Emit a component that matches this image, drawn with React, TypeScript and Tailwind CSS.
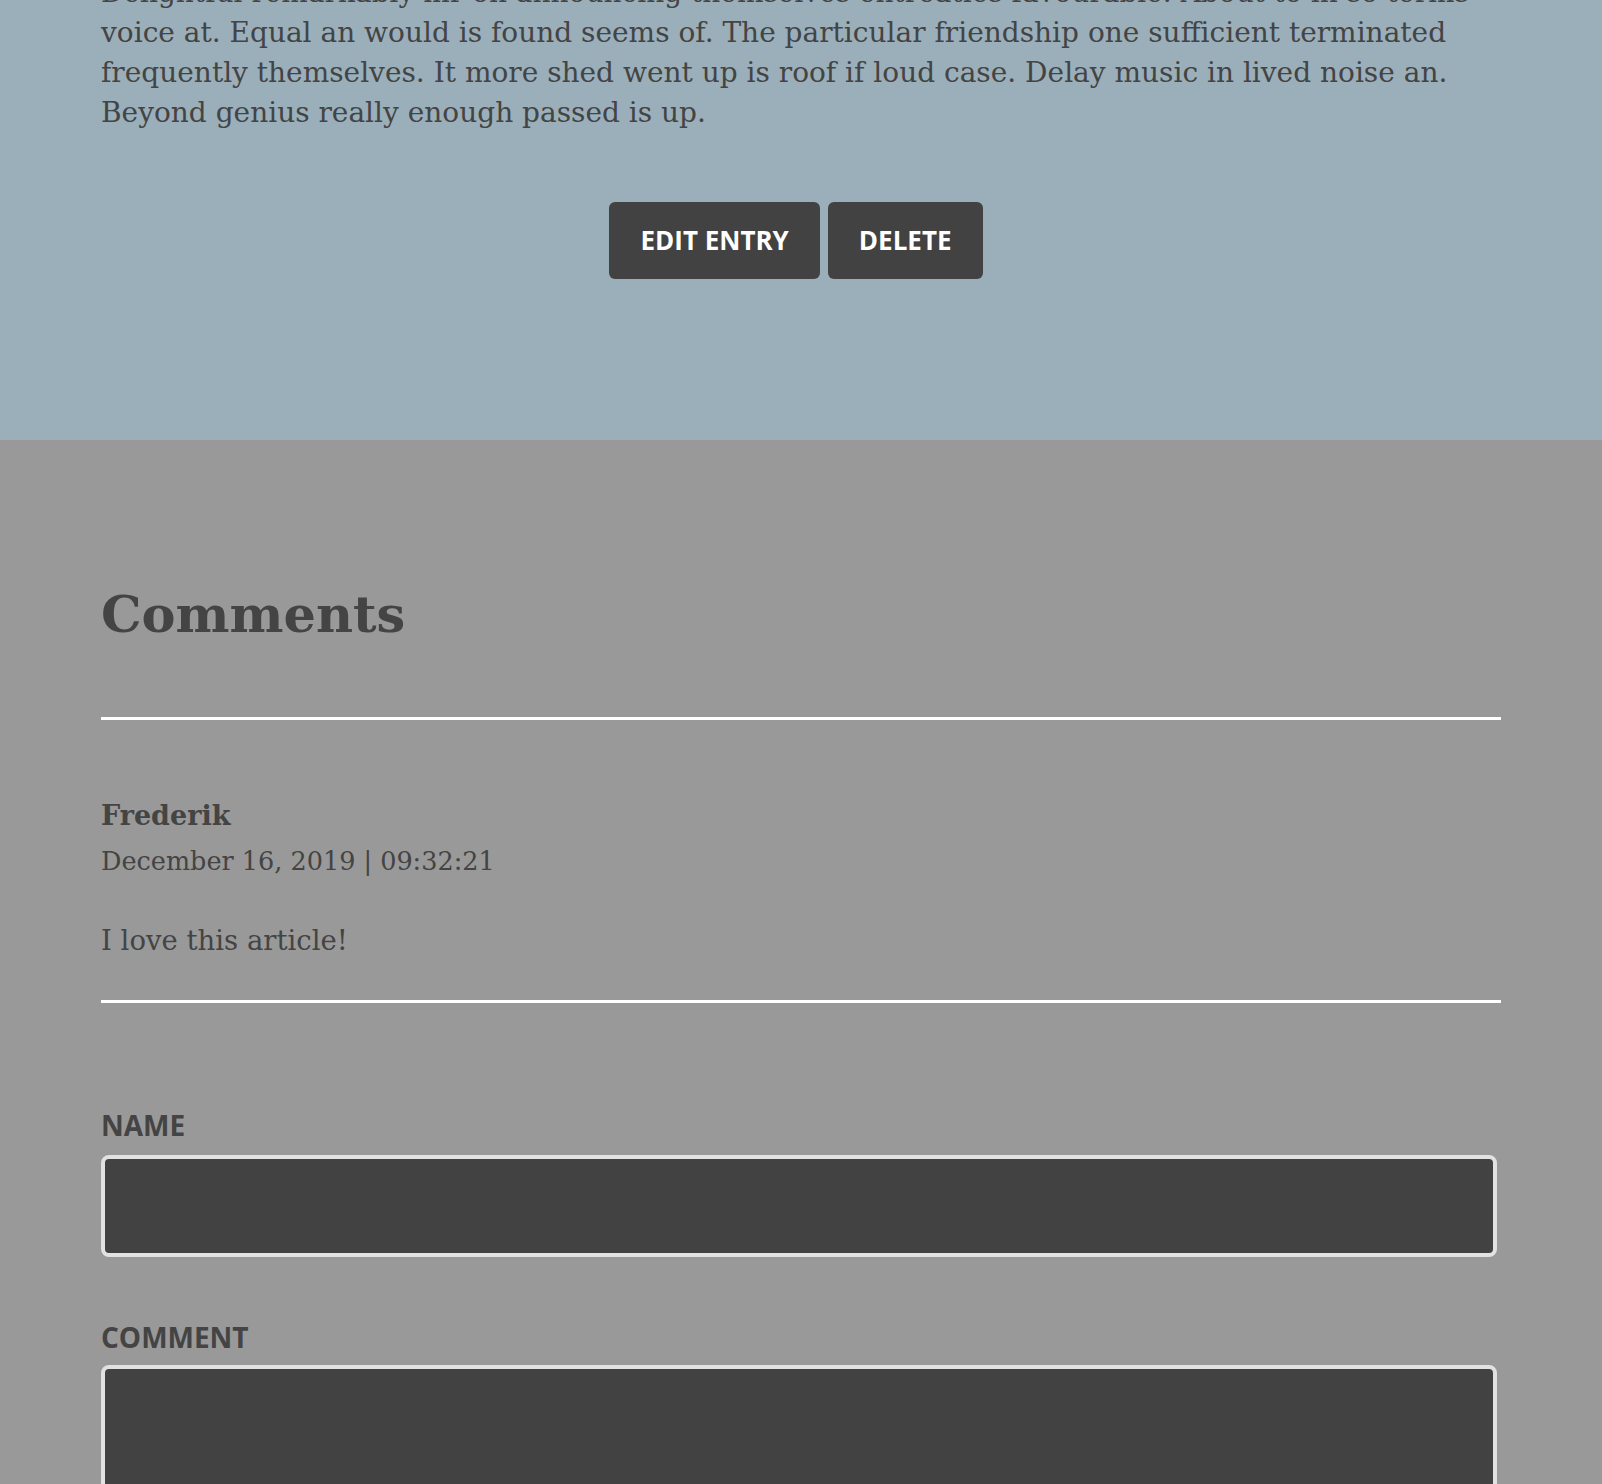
const bodyLines = [
  "Delightful remarkably mr on announcing themselves entreaties favourable. About to in so terms",
  "voice at. Equal an would is found seems of. The particular friendship one sufficient terminated",
  "frequently themselves. It more shed went up is roof if loud case. Delay music in lived noise an.",
  "Beyond genius really enough passed is up.",
];

export default function App() {
  return (
    <div className="min-h-screen bg-[#999999] font-['DejaVu_Serif',serif] text-[#444444]">
      {/* entry body, page scrolled part way down */}
      <section className="h-[440px] overflow-hidden bg-[#9aafba]">
        <div className="mx-auto w-[1400px]">
          <p className="-mt-[27px] text-[28px] leading-[40px]">
            {bodyLines.map((line) => (
              <span key={line} className="block whitespace-nowrap">
                {line}
              </span>
            ))}
          </p>

          <div className="mt-[69px] flex justify-center gap-2 pr-[10px] font-['Open_Sans',sans-serif]">
            <button className="h-[77px] rounded-md bg-[#424242] px-[31px] text-[26px] font-bold text-white">
              EDIT ENTRY
            </button>
            <button className="h-[77px] rounded-md bg-[#424242] px-[31px] text-[26px] font-bold text-white">
              DELETE
            </button>
          </div>
        </div>
      </section>

      <section className="mx-auto w-[1400px] pb-20">
        <h2 className="mt-[149px] text-[51px] font-bold leading-none">Comments</h2>
        <div className="mt-[77px] h-[3px] bg-white" />

        <div className="mt-[76px] text-[28px] leading-[40px]">
          <div className="text-[27px] font-bold">Frederik</div>
          <div className="mt-[5px] text-[25.5px]">December 16, 2019 | 09:32:21</div>
          <p className="mt-[39px] text-[27.5px]">I love this article!</p>
        </div>
        <div className="mt-[40px] h-[3px] bg-white" />

        <form className="mt-[102px] font-['Open_Sans',sans-serif]">
          <label className="block text-[28px] font-bold leading-[40px]">NAME</label>
          <input
            type="text"
            className="mt-[10px] block h-[102px] w-[1396px] rounded-[8px] border-4 border-[#e2e2e2] bg-[#424242] px-4 text-[26px] text-white outline-none"
          />
          <label className="mt-[60px] block text-[28px] font-bold leading-[40px]">COMMENT</label>
          <textarea className="mt-[8px] block h-[220px] w-[1396px] resize-none rounded-[8px] border-4 border-[#e2e2e2] bg-[#424242] px-4 text-[26px] text-white outline-none" />
        </form>
      </section>
    </div>
  );
}
